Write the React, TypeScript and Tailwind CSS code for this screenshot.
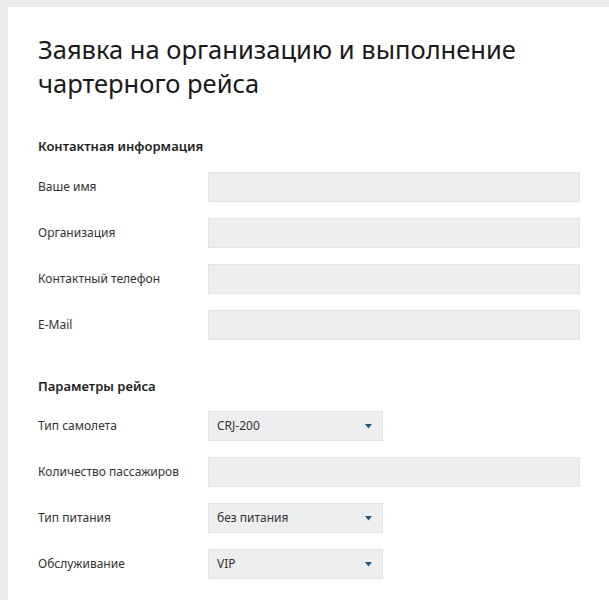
import React from "react";

const font = { fontFamily: '"Noto Sans", "Open Sans", sans-serif' };

function Arrow() {
  return (
    <svg width="7" height="5" viewBox="0 0 7 5" className="shrink-0">
      <path d="M0 0 L7 0 L3.5 4.5 Z" fill="#24557a" />
    </svg>
  );
}

function TextRow({ label }: { label: string }) {
  return (
    <div className="flex items-center h-[30px]">
      <div className="w-[170px] shrink-0 text-[12px] text-[#333]">{label}</div>
      <div className="flex-1 h-[30px] bg-[#eceef0] border border-[#e2e5e7]" />
    </div>
  );
}

function SelectRow({ label, value }: { label: string; value: string }) {
  return (
    <div className="flex items-center h-[30px]">
      <div className="w-[170px] shrink-0 text-[12px] text-[#333]">{label}</div>
      <div className="w-[175px] h-[30px] bg-[#eceef0] border border-[#e2e5e7] flex items-center justify-between pl-[8px] pr-[10px]">
        <span className="text-[12px] text-[#333]">{value}</span>
        <Arrow />
      </div>
    </div>
  );
}

export default function App() {
  return (
    <div className="min-h-screen bg-[#e8eaec] pt-[7px] pl-[8px]" style={font}>
      <div className="bg-white min-h-[593px] pl-[30px] pr-[29px] pt-[25px] pb-[20px]">
        <h1 className="text-[25.5px] leading-[34px] text-[#1a1a1a] font-normal">
          Заявка на организацию и выполнение
          <br />
          чартерного рейса
        </h1>
        <div className="mt-[37px] text-[13px] font-semibold text-[#222] leading-[18px]">
          Контактная информация
        </div>
        <div className="mt-[17px] flex flex-col gap-[16px]">
          <TextRow label="Ваше имя" />
          <TextRow label="Организация" />
          <TextRow label="Контактный телефон" />
          <TextRow label="E-Mail" />
        </div>
        <div className="mt-[37px] text-[13px] font-semibold text-[#222] leading-[18px]">
          Параметры рейса
        </div>
        <div className="mt-[16px] flex flex-col gap-[16px]">
          <SelectRow label="Тип самолета" value="CRJ-200" />
          <TextRow label="Количество пассажиров" />
          <SelectRow label="Тип питания" value="без питания" />
          <SelectRow label="Обслуживание" value="VIP" />
        </div>
      </div>
    </div>
  );
}
